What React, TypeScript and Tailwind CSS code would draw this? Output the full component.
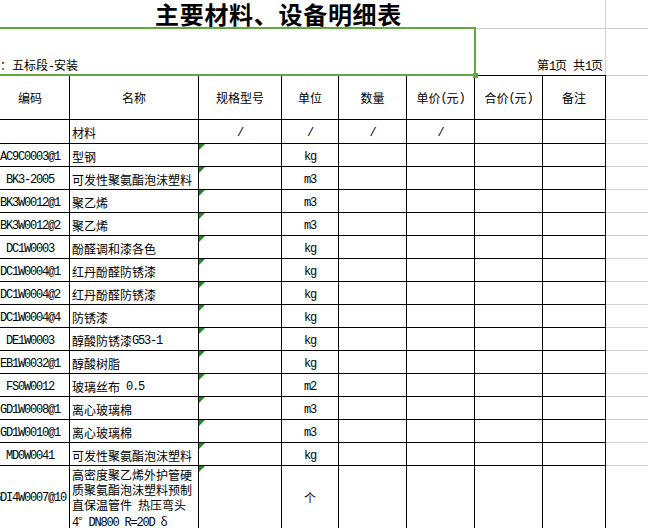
import React from "react";

const cjk = "font-['Noto_Sans_CJK_SC',sans-serif]";
const mono = "font-['Liberation_Mono','Noto_Sans_CJK_SC',monospace] tracking-[-1.2px]";
const grid = "grid grid-cols-[79px_129px_83px_57px_68px_68px_68px_63px_52px]";

interface Item {
  code: string;
  name: string;
  unit: string;
}

const items: Item[] = [
  { code: "AC9C0003@1", name: "型钢", unit: "kg" },
  { code: "BK3-2005", name: "可发性聚氨酯泡沫塑料", unit: "m3" },
  { code: "BK3W0012@1", name: "聚乙烯", unit: "m3" },
  { code: "BK3W0012@2", name: "聚乙烯", unit: "m3" },
  { code: "DC1W0003", name: "酚醛调和漆各色", unit: "kg" },
  { code: "DC1W0004@1", name: "红丹酚醛防锈漆", unit: "kg" },
  { code: "DC1W0004@2", name: "红丹酚醛防锈漆", unit: "kg" },
  { code: "DC1W0004@4", name: "防锈漆", unit: "kg" },
  { code: "DE1W0003", name: "醇酸防锈漆G53-1", unit: "kg" },
  { code: "EB1W0032@1", name: "醇酸树脂", unit: "kg" },
  { code: "FS0W0012", name: "玻璃丝布 0.5", unit: "m2" },
  { code: "GD1W0008@1", name: "离心玻璃棉", unit: "m3" },
  { code: "GD1W0010@1", name: "离心玻璃棉", unit: "m3" },
  { code: "MD0W0041", name: "可发性聚氨酯泡沫塑料", unit: "kg" },
];

// SimSun-like: ascii runs half width, the rest in the CJK face
function Mixed({ text }: { text: string }) {
  const runs = text.match(/[\x20-\x7e]+|[^\x20-\x7e]+/g) ?? [];
  return (
    <>
      {runs.map((r, i) =>
        /^[\x20-\x7e]+$/.test(r) ? (
          <span key={i} className={`${mono} whitespace-pre`}>
            {r}
          </span>
        ) : (
          <span key={i} className={cjk}>
            {r}
          </span>
        ),
      )}
    </>
  );
}

function Flag() {
  return (
    <svg className="absolute left-0 top-0" width="6" height="6" viewBox="0 0 6 6">
      <polygon points="0,0 6,0 0,6" fill="#1f8a1f" />
    </svg>
  );
}

const cell = "border-r border-b border-black text-[12px] leading-[12px] text-black";
const extra = "border-b border-[#d0d0d0]";

function DataRow({ item }: { item: Item }) {
  return (
    <div className={`${grid} h-[23px]`}>
      <div className={`${cell} ${mono} flex items-center justify-center pt-[3px] whitespace-nowrap`}>{item.code}</div>
      <div className={`${cell} flex items-center pl-[2px] pt-[3px] whitespace-nowrap`}>
        <Mixed text={item.name} />
      </div>
      <div className={`${cell} relative`}>
        <Flag />
      </div>
      <div className={`${cell} ${mono} flex items-center justify-center pt-[3px]`}>{item.unit}</div>
      <div className={cell} />
      <div className={cell} />
      <div className={cell} />
      <div className={cell} />
      <div className={extra} />
    </div>
  );
}

export default function App() {
  const heads = ["编码", "名称", "规格型号", "单位", "数量", "单价(元)", "合价(元)", "备注"];
  return (
    <div className="relative w-[648px] h-[528px] overflow-hidden bg-white">
      <div className="-ml-[9px] w-[667px]">
        {/* title */}
        <div className="flex h-[28px]">
          <div className="w-[615px] border-r border-[#d0d0d0] pl-[164px] pt-[1px]">
            <span className={`${cjk} text-[24px] leading-[26px] font-bold tracking-[0.7px] text-black`}>
              主要材料、设备明细表
            </span>
          </div>
          <div className="flex-1" />
        </div>

        {/* project line */}
        <div className="flex h-[47px] border-t border-[#d0d0d0]">
          <div className="w-[615px] border-r border-[#d0d0d0] flex items-end justify-between pl-[9px] pr-[2px] pb-[1px]">
            <span className="text-[12px] leading-[14px] text-black">
              <Mixed text="：五标段-安装" />
            </span>
            <span className="text-[12px] leading-[14px] text-black">
              <Mixed text="第1页 共1页" />
            </span>
          </div>
          <div className="flex-1" />
        </div>

        {/* header */}
        <div className={`${grid} h-[45px]`}>
          {heads.map((h) => (
            <div
              key={h}
              className={`${cell} border-t flex items-center justify-center pt-[1px] whitespace-nowrap`}
            >
              <Mixed text={h} />
            </div>
          ))}
          <div className="border-t border-b border-[#d0d0d0]" />
        </div>

        {/* 材料 row */}
        <div className={`${grid} h-[24px]`}>
          <div className={cell} />
          <div className={`${cell} ${cjk} flex items-center pl-[2px] pt-[3px]`}>材料</div>
          {[0, 1, 2, 3].map((i) => (
            <div key={i} className={`${cell} ${mono} flex items-center justify-center pt-[3px]`}>
              /
            </div>
          ))}
          <div className={cell} />
          <div className={cell} />
          <div className={extra} />
        </div>

        {items.map((it) => (
          <DataRow key={it.code} item={it} />
        ))}

        {/* last, tall row */}
        <div className={`${grid} h-[63px]`}>
          <div className={`${cell} ${mono} flex items-center justify-center whitespace-nowrap`}>GDI4W0007@10</div>
          <div className={`${cell} pl-[2px] pt-[2px]`}>
            <div className="whitespace-nowrap leading-[14px]">
              <Mixed text="高密度聚乙烯外护管硬" />
            </div>
            <div className="whitespace-nowrap leading-[14px]">
              <Mixed text="质聚氨酯泡沫塑料预制" />
            </div>
            <div className="whitespace-nowrap leading-[14px]">
              <Mixed text="直保温管件 热压弯头" />
            </div>
            <div className="whitespace-nowrap leading-[14px]">
              <Mixed text="4° DN800 R=20D δ" />
            </div>
          </div>
          <div className={`${cell} relative`}>
            <Flag />
          </div>
          <div className={`${cell} ${cjk} flex items-center justify-center`}>个</div>
          <div className={cell} />
          <div className={cell} />
          <div className={cell} />
          <div className={cell} />
          <div />
        </div>
      </div>

      {/* selected range outline */}
      <div className="absolute left-[-20px] top-[27px] w-[496px] h-[49px] border-2 border-[#61a83f]" />
      <div className="absolute left-[473px] top-[73px] w-[5px] h-[5px] bg-[#61a83f]" />
    </div>
  );
}
